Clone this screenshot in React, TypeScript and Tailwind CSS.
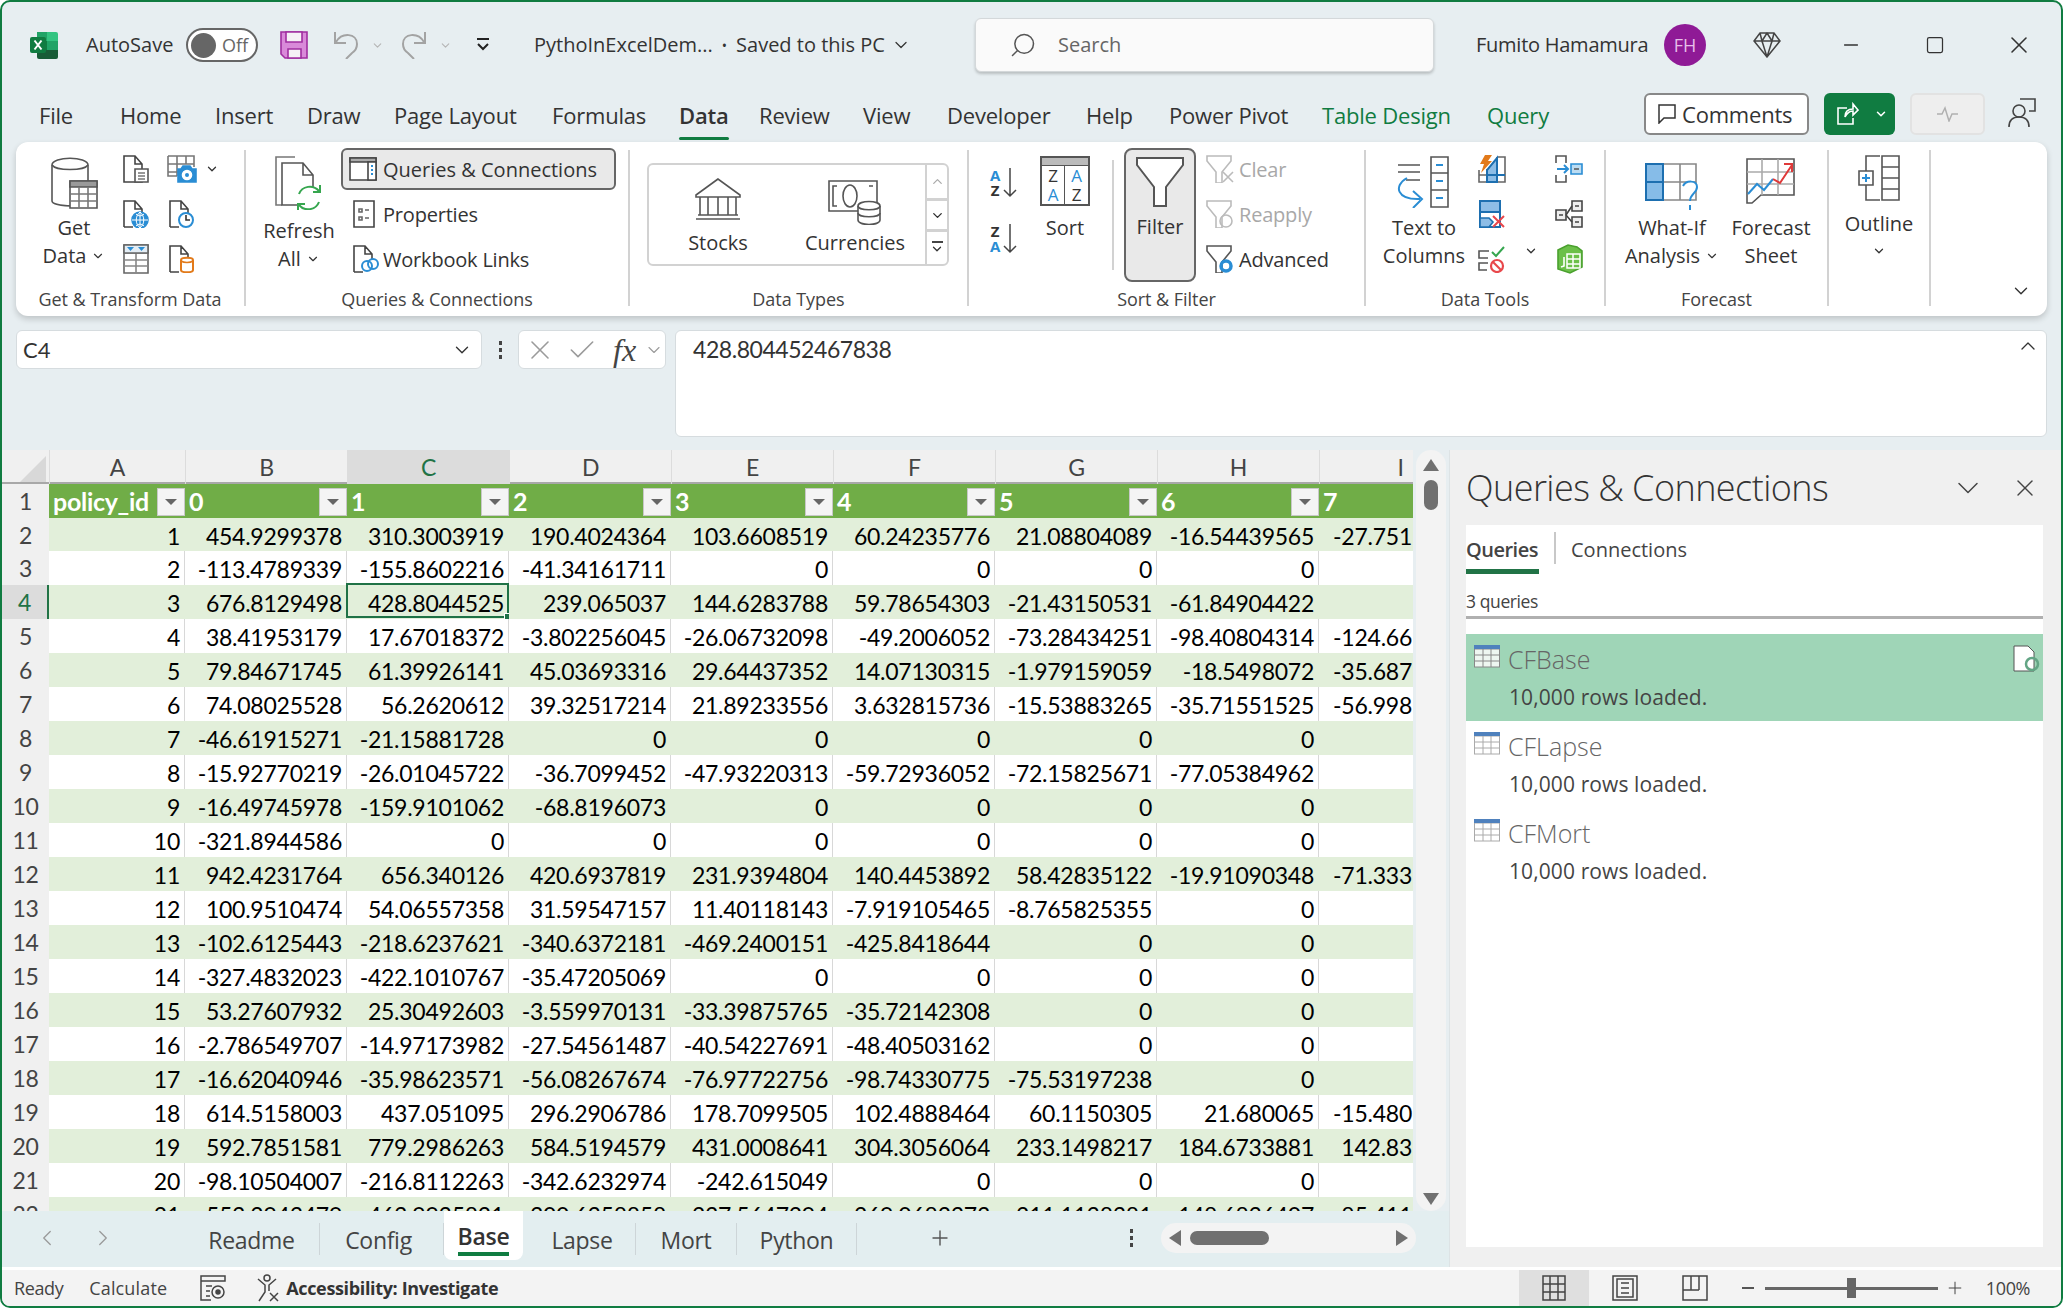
import React from 'react';
import { ChevronDown, ChevronUp, ChevronLeft, ChevronRight, X, Check, Minus, Square, Search, Plus } from 'lucide-react';

const tabs: [string, number, string?][] = [
  ['File', 81], ['Home', 95], ['Insert', 92], ['Draw', 87], ['Page Layout', 158], ['Formulas', 127], ['Data', 80], ['Review', 104],
  ['View', 84], ['Developer', 139], ['Help', 83], ['Power Pivot', 153], ['Table Design', 165, 'g'], ['Query', 100, 'g'],
];

const rows: string[][] = [
  ['454.9299378', '310.3003919', '190.4024364', '103.6608519', '60.24235776', '21.08804089', '-16.54439565', '-27.751'],
  ['-113.4789339', '-155.8602216', '-41.34161711', '0', '0', '0', '0', ''],
  ['676.8129498', '428.8044525', '239.065037', '144.6283788', '59.78654303', '-21.43150531', '-61.84904422', ''],
  ['38.41953179', '17.67018372', '-3.802256045', '-26.06732098', '-49.2006052', '-73.28434251', '-98.40804314', '-124.66'],
  ['79.84671745', '61.39926141', '45.03693316', '29.64437352', '14.07130315', '-1.979159059', '-18.5498072', '-35.687'],
  ['74.08025528', '56.2620612', '39.32517214', '21.89233556', '3.632815736', '-15.53883265', '-35.71551525', '-56.998'],
  ['-46.61915271', '-21.15881728', '0', '0', '0', '0', '0', ''],
  ['-15.92770219', '-26.01045722', '-36.7099452', '-47.93220313', '-59.72936052', '-72.15825671', '-77.05384962', ''],
  ['-16.49745978', '-159.9101062', '-68.8196073', '0', '0', '0', '0', ''],
  ['-321.8944586', '0', '0', '0', '0', '0', '0', ''],
  ['942.4231764', '656.340126', '420.6937819', '231.9394804', '140.4453892', '58.42835122', '-19.91090348', '-71.333'],
  ['100.9510474', '54.06557358', '31.59547157', '11.40118143', '-7.919105465', '-8.765825355', '0', ''],
  ['-102.6125443', '-218.6237621', '-340.6372181', '-469.2400151', '-425.8418644', '0', '0', ''],
  ['-327.4832023', '-422.1010767', '-35.47205069', '0', '0', '0', '0', ''],
  ['53.27607932', '25.30492603', '-3.559970131', '-33.39875765', '-35.72142308', '0', '0', ''],
  ['-2.786549707', '-14.97173982', '-27.54561487', '-40.54227691', '-48.40503162', '0', '0', ''],
  ['-16.62040946', '-35.98623571', '-56.08267674', '-76.97722756', '-98.74330775', '-75.53197238', '0', ''],
  ['614.5158003', '437.051095', '296.2906786', '178.7099505', '102.4888464', '60.1150305', '21.680065', '-15.480'],
  ['592.7851581', '779.2986263', '584.5194579', '431.0008641', '304.3056064', '233.1498217', '184.6733881', '142.83'],
  ['-98.10504007', '-216.8112263', '-342.6232974', '-242.615049', '0', '0', '0', ''],
  ['553.2943479', '463.9935821', '300.6358858', '237.5647294', '-269.0682373', '-211.1138381', '-148.6836407', '-85.411'],
];

const gridCols = 'grid grid-cols-[47px_136px_162px_162px_162px_162px_162px_162px_162px_162px]';

function Ico({ w, h, children }: { w: number; h: number; children: React.ReactNode }) {
  return (
    <svg width={w} height={h} viewBox={`0 0 ${w} ${h}`} fill="none" stroke="#555" strokeWidth="1.6" className="block shrink-0">
      {children}
    </svg>
  );
}

const Doc = () => <path d="M1 27V1h11l7 8v6 M12 1v8h7 M1 27h9" fill="#fff" stroke="#444" />;

function Small({ kind }: { kind: string }) {
  if (kind === 'textdoc')
    return <Ico w={26} h={28}><path d="M1 1h11l7 8v18H1z M12 1v8h7" fill="#fff" stroke="#444" /><path d="M12 14h13v13H12z" fill="#fff" stroke="#555" /><path d="M15 18h7M15 21h7M15 24h7" stroke="#777" /></Ico>;
  if (kind === 'webcam')
    return <Ico w={30} h={28}><path d="M1 1h26v11M1 9h26M1 17h11M10 1v20M19 1v8M1 1v20h9" stroke="#777" /><path d="M11 14h3l2-3h7l2 3h4v13H11z" fill="#2a8dd4" stroke="#2a8dd4" /><circle cx="20" cy="20" r="4.5" fill="#fff" stroke="#fff" /><circle cx="20" cy="20" r="2" fill="#2a8dd4" stroke="none" /></Ico>;
  if (kind === 'webdoc')
    return <Ico w={26} h={28}><Doc /><circle cx="17" cy="20" r="8" fill="#2a8dd4" stroke="#2a8dd4" /><path d="M9 20h16M17 12v16M13 14c3 2.500 5 2.500 8 0M13 26c3-2.500 5-2.500 8 0M17 12c-5 4-5 12 0 16M17 12c5 4 5 12 0 16" stroke="#fff" strokeWidth="1" /></Ico>;
  if (kind === 'recent')
    return <Ico w={26} h={28}><Doc /><circle cx="17" cy="20" r="7" fill="#fff" stroke="#2a8dd4" strokeWidth="2" /><path d="M17 15v5h4" stroke="#333" /></Ico>;
  if (kind === 'tablefilter')
    return <Ico w={26} h={30}><path d="M1 1h24v28H1z" fill="#fff" stroke="#666" /><path d="M1 9h24M1 16h24M1 22h24M13 9v20" stroke="#888" /><path d="M1 1h24v8H1z" fill="#e3edf5" stroke="#666" /><path d="M4 3h7l-3.500 4zM15 3h7l-3.500 4z" fill="#2a8dd4" stroke="none" /></Ico>;
  if (kind === 'dbdoc')
    return <Ico w={26} h={28}><Doc /><path d="M12 15c0-3 12-3 12 0v10c0 3-12 3-12 0z" fill="#fff" stroke="#e27a1a" strokeWidth="2" /><path d="M12 16c3 2 9 2 12 0" stroke="#e27a1a" /></Ico>;
  if (kind === 'flash')
    return <Ico w={28} h={28}><path d="M1 15v12h26V2h-7" stroke="#666" /><path d="M1 20h26M19 2v25M9 14v13" stroke="#666" /><path d="M9 27V15L19 3v24zM9 20h18" fill="#8dbde6" stroke="#1d6fb0" strokeWidth="2" /><path d="M7 0h7l-4 6h4L3 18l3-9H2z" fill="#e27a1a" stroke="none" /></Ico>;
  if (kind === 'dup')
    return <Ico w={26} h={28}><path d="M1 1h20v26H1z" fill="#fff" stroke="#1d6fb0" strokeWidth="2" /><path d="M1 1h20v11H1z" fill="#8dbde6" stroke="#1d6fb0" strokeWidth="2" /><path d="M1 18h9l4 4-4 5H1z" fill="#8dbde6" stroke="#1d6fb0" /><path d="M14 16l11 11M25 16L14 27" stroke="#e8474b" strokeWidth="2" /></Ico>;
  if (kind === 'valid')
    return <Ico w={28} h={28}><path d="M11 6H1v7h9M10 18H1v7h8" stroke="#555" /><path d="M14 7l4 4 8-9" stroke="#36a64f" strokeWidth="2" /><circle cx="19" cy="21" r="6" stroke="#e8474b" strokeWidth="2.2" fill="#fff" /><path d="M15 17l8 8" stroke="#e8474b" strokeWidth="2.2" /></Ico>;
  if (kind === 'consol')
    return <Ico w={28} h={28}><path d="M11 8V1H1v7M1 20v7h10v-7" stroke="#555" /><path d="M2 14h11M9 10l4 4-4 4" stroke="#2a8dd4" strokeWidth="2" /><path d="M16 9h11v10H16z" fill="#bcdcf2" stroke="#2a8dd4" /><path d="M19 14h5" stroke="#555" /></Ico>;
  if (kind === 'relations')
    return <Ico w={28} h={28}><path d="M1 10h10v10H1zM17 1h10v10H17zM17 17h10v10H17z" fill="#eee" stroke="#444" /><path d="M11 15l6-9M11 15l6 7" stroke="#444" /><path d="M4 15h4M20 6h4M20 22h4" stroke="#444" /></Ico>;
  return <Ico w={28} h={30}><path d="M3 6l10-5 9 2 5 4v16l-12 6-12-4z" fill="#6cc04a" stroke="#4aa12e" /><path d="M12 10h13v14H12z" stroke="#fff" strokeWidth="1.5" /><path d="M18 10v14M12 15h13M12 20h13" stroke="#fff" strokeWidth="1.5" /><path d="M9 13v9l-3 1" stroke="#fff" /></Ico>;
}

function SmallStack({ items, className = '' }: { items: string[]; className?: string }) {
  return (
    <div className={`flex flex-col items-center pt-[4px] ${className}`}>
      {items.map((k, i) => (
        <div key={i} className="h-[45px] flex items-center justify-center"><Small kind={k} /></div>
      ))}
    </div>
  );
}

function Big({ width, ml = 0, top, icon, lines, gap, chev }: { width: number; ml?: number; top: number; icon: React.ReactNode; lines: string[]; gap: number; chev?: boolean }) {
  return (
    <div className="flex flex-col items-center shrink-0" style={{ width, marginLeft: ml, paddingTop: top }}>
      {icon}
      <div style={{ marginTop: gap }} className="flex flex-col items-center leading-[28px]">
        {lines.map((l, i) => (
          <span key={l} className="flex items-center gap-[5px] whitespace-nowrap">
            {l}
            {chev && i === lines.length - 1 && <ChevronDown size={14} strokeWidth={2} />}
          </span>
        ))}
      </div>
    </div>
  );
}

function Group({ width, label, children }: { width: number; label: string; children: React.ReactNode }) {
  return (
    <>
      <div className="flex flex-col h-[174px] shrink-0" style={{ width }}>
        <div className="flex h-[142px]">{children}</div>
        <div className="h-[30px] leading-[30px] text-center text-[18px] tracking-[-0.05px] text-[#444] whitespace-nowrap">{label}</div>
      </div>
      <div className="w-[2px] h-[156px] mt-[8px] bg-[#d2d2d2] shrink-0" />
    </>
  );
}

function ListRow({ icon, text, muted, active }: { icon: React.ReactNode; text: string; muted?: boolean; active?: boolean }) {
  return (
    <div className={`h-[45px] flex items-center ${muted ? 'text-[#a8a8a8]' : ''}`}>
      <div className={`flex items-center h-[42px] w-full ${active ? 'bg-[#e9e9e9] border-2 border-[#666] rounded-[6px]' : 'border-2 border-transparent'}`}>
        {icon}
        <span className={`whitespace-nowrap pt-[2px] ${active ? '' : 'tracking-[-0.2px]'}`}>{text}</span>
      </div>
    </div>
  );
}

const Funnel = ({ c = '#555' }: { c?: string }) => (
  <path d="M1 1h24v5L16 17v11h-6V17L1 6z" fill="#fff" stroke={c} />
);

function Ribbon() {
  return (
    <div className="ml-[14px] w-[2031px] h-[174px] bg-white rounded-[12px] flex shadow-[0_3px_6px_rgba(0,0,0,0.18)] text-[20px] text-[#333]">
      <Group width={228} label="Get & Transform Data">
        <Big width={80} ml={18} top={15} gap={5} chev lines={['Get', 'Data']} icon={
          <Ico w={48} h={52}>
            <path d="M2 8c0-9 36-9 36 0v38c-3 2-8 3-12 3-10 0-24-1-24-5z" fill="#fff" />
            <path d="M2 8c4 6 32 6 36 0" />
            <path d="M20 24h27v27H20z" fill="#fff" />
            <path d="M20 24h27v6H20z" fill="#9a9a9a" />
            <path d="M20 37h27M20 44h27M29 30v21M38 30v21" stroke="#777" />
          </Ico>
        } />
        <SmallStack items={['textdoc', 'webdoc', 'tablefilter']} className="w-[46px] ml-[-1px]" />
        <SmallStack items={['webcam', 'recent', 'dbdoc']} className="w-[46px]" />
        <ChevronDown size={14} strokeWidth={2.2} className="ml-[0px] mt-[20px] text-[#333]" />
      </Group>
      <Group width={382} label="Queries & Connections">
        <Big width={84} ml={11} top={14} gap={7} chev lines={['Refresh', 'All']} icon={
          <Ico w={48} h={54}>
            <path d="M20 1H1v48h6" stroke="#777" />
            <path d="M7 7h21l10 12v30H7z M28 7v12h10" fill="#fff" />
            <circle cx="34" cy="42" r="11" fill="#fff" stroke="#fff" />
            <path d="M24 38c3-8 14-10 20-3M44 46c-3 8-14 10-20 3" stroke="#36a64f" strokeWidth="2" />
            <path d="M45 29v7h-7M23 55v-7h7" stroke="#36a64f" strokeWidth="2" />
          </Ico>
        } />
        <div className="flex flex-col w-[275px] pt-[4px]">
          <ListRow active text="Queries & Connections" icon={
            <span className="mx-[6px]"><Ico w={28} h={24}><path d="M1 1h26v22H1z" fill="#fff" stroke="#444" /><path d="M1 1h26v4H1z" fill="#aaa" stroke="#444" /><path d="M19 5h8v18h-8z" fill="#fff" stroke="#444" /><path d="M22 9h2M22 13h2M22 17h2" stroke="#2a8dd4" strokeWidth="2" /></Ico></span>
          } />
          <ListRow text="Properties" icon={
            <span className="ml-[10px] mr-[8px]"><Ico w={22} h={28}><path d="M1 1h20v26H1z" fill="#fff" stroke="#444" /><path d="M6 9h3v3H6zM6 17h3v3H6zM12 10h4M12 18h4" stroke="#666" /></Ico></span>
          } />
          <ListRow text="Workbook Links" icon={
            <span className="ml-[10px] mr-[4px]"><Ico w={26} h={28}><Doc /><circle cx="14" cy="21" r="5" stroke="#2a8dd4" strokeWidth="2" fill="#fff" /><circle cx="20" cy="19" r="5" stroke="#2a8dd4" strokeWidth="2" /></Ico></span>
          } />
        </div>
      </Group>
      <Group width={337} label="Data Types">
        <div className="ml-[17px] mt-[21px] w-[302px] h-[103px] flex border-2 border-[#d2d2d2] rounded-[6px]">
          <div className="w-[138px] pt-[13px] flex flex-col items-center">
            <Ico w={48} h={42}>
              <path d="M24 1L2 17v2h44v-2z" fill="#fff" />
              <path d="M6 19v18M14 19v18M24 19v18M34 19v18M42 19v18M4 37h40M2 41h44" />
            </Ico>
            <span className="mt-[9px] leading-[28px]">Stocks</span>
          </div>
          <div className="w-[136px] pt-[14px] flex flex-col items-center">
            <Ico w={54} h={46}>
              <path d="M1 2h48v30H1z" fill="#fff" />
              <path d="M9 7H5v20h4M41 7h4" />
              <ellipse cx="22" cy="17" rx="7" ry="11" />
              <path d="M30 27c0-6 22-6 22 0v14c0 6-22 6-22 0z" fill="#fff" />
              <path d="M30 27c0 5 22 5 22 0M30 34c0 5 22 5 22 0" />
            </Ico>
            <span className="mt-[4px] leading-[28px]">Currencies</span>
          </div>
          <div className="ml-[2px] flex-1 flex flex-col border-l-2 border-[#d2d2d2]">
            <div className="h-[33px] flex items-center justify-center"><ChevronUp size={15} className="text-[#aaa]" /></div>
            <div className="h-[34px] border-y-3 border-[#d2d2d2] flex items-center justify-center"><ChevronDown size={15} strokeWidth={2.2} /></div>
            <div className="flex-1 flex flex-col items-center justify-center gap-[2px]"><div className="w-[11px] h-[2px] bg-[#444]" /><ChevronDown size={14} strokeWidth={2.2} className="mt-[-3px]" /></div>
          </div>
        </div>
      </Group>
      <Group width={395} label="Sort & Filter">
        <div className="w-[30px] ml-[21px] flex flex-col pt-[26px] shrink-0">
          <div className="flex font-bold text-[15px] leading-[15px]">
            <span className="flex flex-col items-center"><span className="text-[#2a8dd4]">A</span><span>Z</span></span>
            <svg width="16" height="30" viewBox="0 0 16 30" fill="none" stroke="#444" strokeWidth="1.5" className="ml-[2px]"><path d="M8 0v28M2 22l6 6 6-6" /></svg>
          </div>
          <div className="flex font-bold text-[15px] leading-[15px] mt-[26px]">
            <span className="flex flex-col items-center"><span>Z</span><span className="text-[#2a8dd4]">A</span></span>
            <svg width="16" height="30" viewBox="0 0 16 30" fill="none" stroke="#444" strokeWidth="1.5" className="ml-[2px]"><path d="M8 0v28M2 22l6 6 6-6" /></svg>
          </div>
        </div>
        <div className="w-[60px] ml-[15px] pt-[14px] flex flex-col items-center shrink-0">
          <div className="w-[50px] h-[50px] border-2 border-[#555] grid grid-cols-2 text-[17px] leading-[19px] text-center bg-white">
            <div className="col-span-2 h-[8px] bg-[#bbb] border-b border-[#555]" />
            <div className="border-r border-[#555] flex flex-col"><span>Z</span><span className="text-[#2a8dd4]">A</span></div>
            <div className="flex flex-col"><span className="text-[#2a8dd4]">A</span><span>Z</span></div>
          </div>
          <span className="mt-[8px] leading-[28px]">Sort</span>
        </div>
        <div className="w-[2px] h-[110px] mt-[18px] ml-[17px] bg-[#d2d2d2] shrink-0" />
        <div className="w-[72px] h-[134px] ml-[10px] mt-[6px] bg-[#e9e9e9] border-2 border-[#666] rounded-[8px] flex flex-col items-center pt-[7px] shrink-0">
          <svg width="48" height="50" viewBox="0 0 48 50" fill="none" stroke="#555" strokeWidth="2"><path d="M1 1h46v7L30 30v19H18V30L1 8z" fill="#fff" /></svg>
          <span className="mt-[6px] leading-[28px]">Filter</span>
        </div>
        <div className="flex flex-col pt-[4px] ml-[8px]">
          <ListRow muted text="Clear" icon={<span className="mr-[5px]"><Ico w={28} h={28}><Funnel c="#bbb" /><path d="M17 17l10 10M27 17L17 27" stroke="#bbb" /></Ico></span>} />
          <ListRow muted text="Reapply" icon={<span className="mr-[5px]"><Ico w={28} h={28}><Funnel c="#bbb" /><circle cx="20" cy="21" r="6" stroke="#bbb" /></Ico></span>} />
          <ListRow text="Advanced" icon={<span className="mr-[5px]"><Ico w={28} h={28}><Funnel /><circle cx="20" cy="21" r="5" stroke="#2a8dd4" strokeWidth="3.5" /><circle cx="20" cy="21" r="1.5" fill="#fff" stroke="none" /></Ico></span>} />
        </div>
      </Group>
      <Group width={238} label="Data Tools">
        <Big width={100} ml={8} top={14} gap={6} lines={['Text to', 'Columns']} icon={
          <Ico w={54} h={52}>
            <path d="M1 9h22M1 16h22M9 24h14" />
            <path d="M34 1h17v50H34z" fill="#fff" />
            <path d="M34 17h17M34 34h17" />
            <path d="M39 9h7M39 25h7M39 42h7" stroke="#2a8dd4" strokeWidth="2" />
            <path d="M10 22C-4 30 0 44 23 43M16 35l9 8-9 9" stroke="#2a8dd4" strokeWidth="2" />
          </Ico>
        } />
        <SmallStack items={['flash', 'dup', 'valid']} className="w-[28px] ml-[4px]" />
        <div className="w-[49px] flex justify-center pt-[102px]"><ChevronDown size={14} strokeWidth={2.2} /></div>
        <SmallStack items={['consol', 'relations', 'pq']} className="w-[28px]" />
      </Group>
      <Group width={221} label="Forecast">
        <Big width={110} ml={11} top={20} gap={2} chev lines={['What-If', 'Analysis']} icon={
          <Ico w={54} h={50}>
            <path d="M1 2h50v36H1z" fill="#fff" stroke="#888" />
            <path d="M18 2v36M35 2v36M1 20h50" stroke="#888" />
            <path d="M1 2h17v18H1zM1 20h17v18H1z" fill="#86bce8" stroke="#1d6fb0" strokeWidth="2" />
            <path d="M38 24c3-6 14-6 14 1 0 6-7 7-7 14M45 43v5" stroke="#2a8dd4" strokeWidth="2" fill="#fff" />
          </Ico>
        } />
        <Big width={88} top={16} gap={6} lines={['Forecast', 'Sheet']} icon={
          <Ico w={50} h={50}>
            <path d="M1 1h47v36H15l-9 8H1z" fill="#fff" />
            <path d="M1 14h47M1 26h47M16 1v36M32 1v36" stroke="#aaa" />
            <path d="M2 36l9-10 7 6 9-11" stroke="#2a8dd4" strokeWidth="2" />
            <path d="M27 21l7 4 12-18M38 6h8v8" stroke="#e03a3a" strokeWidth="2" />
          </Ico>
        } />
      </Group>
      <Group width={100} label="">
        <div className="w-[100px] flex flex-col items-center pt-[13px]">
          <Ico w={42} h={46}>
            <path d="M22 1H8v15M8 29v16h14" />
            <path d="M1 16h14v14H1z" fill="#fff" />
            <path d="M4 23h8M8 19v8" stroke="#2a8dd4" strokeWidth="2" />
            <path d="M24 1h17v44H24z" fill="#fff" />
            <path d="M24 12h17M24 23h17M24 34h17" />
          </Ico>
          <span className="mt-[9px] leading-[28px]">Outline</span>
          <ChevronDown size={14} strokeWidth={2.2} className="mt-[6px]" />
        </div>
      </Group>
      <div className="flex-1 flex justify-end items-end pr-[15px] pb-[14px]">
        <ChevronDown size={22} strokeWidth={1.5} />
      </div>
    </div>
  );
}

function TitleBar() {
  return (
    <div className="h-[88px] flex items-center pb-[2px] text-[20px] text-[#333] shrink-0">
      <svg width="28" height="28" viewBox="0 0 28 28" className="ml-[28px] shrink-0">
        <path d="M7 1h19a2 2 0 0 1 2 2v7H7z" fill="#33c481" />
        <path d="M7 1h10v9H7z" fill="#21a366" />
        <path d="M7 10h10v9H7z" fill="#107c41" />
        <path d="M17 10h11v9H17z" fill="#21a366" />
        <path d="M7 19h21v7a2 2 0 0 1-2 2H9a2 2 0 0 1-2-2z" fill="#185c37" />
        <rect x="0" y="6" width="16" height="16" rx="2" fill="#107c41" />
        <path d="M4.500 9.500l7 9M11.500 9.500l-7 9" stroke="#fff" strokeWidth="2" />
      </svg>
      <span className="ml-[28px] w-[100px] whitespace-nowrap">AutoSave</span>
      <div className="w-[72px] h-[34px] border-2 border-[#666] rounded-full flex items-center bg-white px-[3px] gap-[6px]">
        <div className="w-[25px] h-[25px] rounded-full bg-[#666]" />
        <span className="text-[#666] text-[18px]">Off</span>
      </div>
      <svg width="28" height="28" viewBox="0 0 28 28" className="ml-[22px] shrink-0" stroke="#a02ea0" strokeWidth="1.6">
        <path d="M1 1h26v26H5l-4-4z" fill="#d98ad9" />
        <path d="M6 1h16v10H6z" fill="#f5f0f5" />
        <path d="M8 18h13v9H8z" fill="#f5f0f5" />
      </svg>
      <svg width="26" height="28" viewBox="0 0 26 28" fill="none" stroke="#a3a3a3" strokeWidth="2" className="ml-[25px] shrink-0">
        <path d="M2 1v11h11M3 11c6-10 21-9 21 2 0 4-2 7-5 9l-6 6" />
      </svg>
      <ChevronDown size={13} className="ml-[12px] text-[#b5b5b5]" />
      <svg width="26" height="28" viewBox="0 0 26 28" fill="none" stroke="#a3a3a3" strokeWidth="2" className="ml-[17px] shrink-0">
        <path d="M24 1v11H13M23 11C17 1 2 2 2 13c0 4 2 7 5 9l6 6" />
      </svg>
      <ChevronDown size={13} className="ml-[12px] text-[#b5b5b5]" />
      <svg width="14" height="14" viewBox="0 0 14 14" fill="none" stroke="#222" strokeWidth="2" className="ml-[24px] shrink-0">
        <path d="M1 1h12M2 6l5 5 5-5" />
      </svg>
      <span className="ml-[44px] whitespace-nowrap w-[377px] flex items-center gap-[9px] shrink-0">
        PythoInExcelDem...
        <span className="text-[14px]">•</span>
        Saved to this PC
        <ChevronDown size={24} strokeWidth={1.5} className="ml-[-3px]" />
      </span>
      <div className="ml-[64px] w-[459px] h-[54px] bg-[#fafafa] rounded-[6px] border border-[#d4d8da] shadow-[0_2px_3px_rgba(0,0,0,0.2)] flex items-center pl-[33px] shrink-0">
        <Search size={28} strokeWidth={1.3} className="text-[#555] scale-x-[-1]" />
        <span className="ml-[21px] text-[#666]">Search</span>
      </div>
      <span className="ml-[42px] w-[188px] whitespace-nowrap tracking-[-0.25px]">Fumito Hamamura</span>
      <div className="w-[42px] h-[42px] rounded-full bg-[#8f1a96] text-[#e6bfe8] flex items-center justify-center text-[18px] shrink-0">FH</div>
      <svg width="28" height="26" viewBox="0 0 28 26" fill="none" stroke="#444" strokeWidth="1.5" className="ml-[47px] shrink-0">
        <path d="M7 1h14l6 8-13 16L1 9zM1 9h26M9 9l5 16 5-16M7 1l2 8 5-8 5 8 2-8" />
      </svg>
      <Minus size={22} strokeWidth={1.5} className="ml-[59px]" />
      <Square size={20} strokeWidth={1.5} className="ml-[63px]" />
      <X size={28} strokeWidth={1.3} className="ml-[60px]" />
    </div>
  );
}

function TabRow() {
  return (
    <div className="h-[52px] flex text-[22px] tracking-[-0.2px] text-[#333] pl-[37px] shrink-0">
      {tabs.map(([t, w, g]) => (
        <div key={t} style={{ width: w }} className="shrink-0 h-[52px] pt-[1px] leading-[48px] whitespace-nowrap">
          <span className={`relative inline-block h-[48px] ${t === 'Data' ? 'font-semibold' : ''} ${g ? 'text-[#107c41]' : ''}`}>
            {t}
            {t === 'Data' && <span className="absolute left-0 right-0 bottom-[-1px] h-[3px] bg-[#107c41] rounded" />}
          </span>
        </div>
      ))}
      <div className="ml-[57px] mt-[3px] w-[165px] h-[42px] bg-white border-2 border-[#888] rounded-[6px] flex items-center pl-[12px] gap-[6px] shrink-0">
        <svg width="18" height="20" viewBox="0 0 18 20" fill="none" stroke="#333" strokeWidth="1.5"><path d="M1 1h16v13H6l-5 5z" /></svg>
        Comments
      </div>
      <div className="ml-[15px] mt-[3px] w-[71px] h-[42px] bg-[#107c41] rounded-[6px] flex items-center pl-[13px] gap-[15px] shrink-0">
        <svg width="22" height="24" viewBox="0 0 22 24" fill="none" stroke="#fff" strokeWidth="1.6"><path d="M10 6H1v16h15v-6M8 15c0-6 4-8 8-8V2l5 6-5 5V9c-4 0-6 2-8 6z" /></svg>
        <ChevronDown size={14} strokeWidth={2.6} className="text-white" />
      </div>
      <div className="ml-[15px] mt-[3px] w-[75px] h-[42px] bg-[#eeeeee] border-2 border-[#e2e2e2] rounded-[6px] flex items-center justify-center shrink-0">
        <svg width="24" height="16" viewBox="0 0 24 16" fill="none" stroke="#b0b0b0" strokeWidth="1.5"><path d="M1 8h5l3-6 4 13 3-7h6" /></svg>
      </div>
      <svg width="28" height="30" viewBox="0 0 28 30" fill="none" stroke="#444" strokeWidth="1.6" className="ml-[23px] mt-[8px] shrink-0">
        <circle cx="11" cy="13" r="6" />
        <path d="M1 29c0-7 4-10 10-10s10 3 10 10M12 1h15v12h-6" />
      </svg>
    </div>
  );
}

function FormulaBar() {
  return (
    <div className="h-[134px] flex pt-[14px] pl-[14px] text-[#333] shrink-0">
      <div className="w-[466px] h-[39px] bg-white border border-[#d6dcdf] rounded-[6px] flex items-center justify-between pl-[6px] pr-[8px] font-['Lato',sans-serif] text-[22px]">
        C4
        <ChevronDown size={22} strokeWidth={1.5} />
      </div>
      <div className="w-[36px] h-[39px] flex flex-col items-center justify-center gap-[3px]">
        <div className="w-[3px] h-[4px] bg-[#444]" /><div className="w-[3px] h-[4px] bg-[#444]" /><div className="w-[3px] h-[4px] bg-[#444]" />
      </div>
      <div className="w-[148px] h-[39px] bg-white border border-[#d6dcdf] rounded-[6px] flex items-center pl-[5px] text-[#9b9b9b]">
        <X size={32} strokeWidth={1.2} />
        <Check size={32} strokeWidth={1.2} className="ml-[10px]" />
        <span className="ml-[15px] font-['Liberation_Serif',serif] italic text-[32px] text-[#444] leading-none">fx</span>
        <ChevronDown size={20} strokeWidth={1.3} className="ml-[8px]" />
      </div>
      <div className="ml-[9px] w-[1372px] h-[107px] bg-white border border-[#d6dcdf] rounded-[6px] flex justify-between pl-[17px] pr-[6px] pt-[3px]">
        <span className="font-['Lato',sans-serif] text-[23px] tracking-[-0.45px] leading-[30px]">428.804452467838</span>
        <ChevronUp size={24} strokeWidth={1.3} />
      </div>
    </div>
  );
}

function FilterBtn() {
  return (
    <div className="ml-auto w-[28px] h-[28px] bg-[#f4f4f4] border border-[#c8c8c8] flex items-center justify-center shrink-0">
      <div className="w-0 h-0 border-x-[6px] border-x-transparent border-t-[6px] border-t-[#666]" />
    </div>
  );
}

function Sheet() {
  const letters = ['A', 'B', 'C', 'D', 'E', 'F', 'G', 'H', 'I'];
  const heads = ['policy_id', '0', '1', '2', '3', '4', '5', '6', '7'];
  return (
    <div className="w-[1411px] h-[761px] overflow-hidden bg-white font-['Lato',sans-serif] text-[23px] tracking-[-0.25px] text-black shrink-0">
      <div className={`${gridCols} h-[34px] bg-[#f0f0f0] border-b-2 border-[#a8a8a8] text-[#444]`}>
        <div className="flex items-end justify-end pr-[3px] pb-[2px]">
          <div className="w-0 h-0 border-l-[26px] border-l-transparent border-b-[26px] border-b-[#d8d8d8]" />
        </div>
        {letters.map((l) => (
          <div key={l} className={`text-center leading-[34px] border-l border-[#dcdcdc] ${l === 'C' ? 'bg-[#dcdcdc] text-[#217346] border-b-2 border-[#217346] h-[34px]' : ''}`}>{l}</div>
        ))}
      </div>
      <div className={`${gridCols} h-[33px]`}>
        <div className="bg-[#f0f0f0] text-[#444] text-center leading-[35px]">1</div>
        {heads.map((h) => (
          <div key={h} className="bg-[#70ad47] text-white font-bold text-[25px] tracking-[-0.3px] flex items-center pl-[4px] leading-[35px] whitespace-nowrap">
            {h}
            {h !== '7' && <FilterBtn />}
          </div>
        ))}
      </div>
      {rows.map((r, i) => {
        const odd = i % 2 === 0;
        const selected = i === 2;
        return (
          <div key={i} className={`${gridCols} h-[34px] border-b border-[#a9d08e] box-border ${i === 0 ? 'border-t' : ''}`}>
            <div className={`text-center leading-[35px] ${selected ? 'bg-[#dcdcdc] text-[#217346] border-r-2 border-[#217346]' : 'bg-[#f0f0f0] text-[#444]'}`}>{i + 2}</div>
            <div className={`text-right pr-[4px] leading-[36px] border-r ${odd ? 'bg-[#e2efda] border-transparent' : 'bg-white border-[#d8d8d8]'}`}>{i + 1}</div>
            {r.map((v, j) => (
              <div key={j} className={`relative text-right leading-[36px] whitespace-nowrap ${j < 7 ? 'border-r pr-[4px]' : 'pr-[69px]'} ${odd ? 'bg-[#e2efda] border-transparent' : 'bg-white border-[#d8d8d8]'}`}>
                {v}
                {selected && j === 1 && (
                  <span className="absolute left-[-1px] top-[-2px] w-[163px] h-[35px] border-2 border-[#1f7246]">
                    <span className="absolute right-[-4px] bottom-[-4px] w-[7px] h-[7px] bg-[#1f7246] border border-white" />
                  </span>
                )}
              </div>
            ))}
          </div>
        );
      })}
    </div>
  );
}

function VScroll() {
  return (
    <div className="w-[36px] h-[761px] px-[3px] shrink-0">
      <div className="h-full bg-[#f3f3f3] rounded-full flex flex-col items-center pt-[9px]">
        <div className="w-0 h-0 border-x-[8px] border-x-transparent border-b-[12px] border-b-[#707070]" />
        <div className="w-[14px] h-[30px] mt-[9px] rounded-full bg-[#707070]" />
        <div className="mt-auto mb-[6px] w-0 h-0 border-x-[8px] border-x-transparent border-t-[12px] border-t-[#707070]" />
      </div>
    </div>
  );
}

function SheetTabs() {
  const items: [string, number, string][] = [
    ['Readme', 136, ''], ['Config', 124, 'pr-[6px]'], ['Base', 79, ''], ['Lapse', 113, 'pl-[6px]'], ['Mort', 101, ''], ['Python', 120, ''],
  ];
  return (
    <div className="h-[56px] flex bg-[#e3eef0] text-[#444] text-[23px] tracking-[-0.3px]">
      <ChevronLeft size={26} strokeWidth={1.2} className="ml-[32px] mt-[14px] text-[#999]" />
      <ChevronRight size={26} strokeWidth={1.2} className="ml-[30px] mt-[14px] text-[#999]" />
      <div className="ml-[68px] flex items-start shrink-0">
        {items.map(([t, w, pad]) => (
          <div key={t} style={{ width: w }} className={`flex justify-center shrink-0 ${pad} ${t === 'Base' ? 'h-[49px] bg-white rounded-b-[8px]' : 'mt-[12px] h-[32px] border-r border-[#cdd5d8] leading-[34px]'}`}>
            {t === 'Base' ? (
              <span className="h-[45px] leading-[50px] font-semibold border-b-[4px] border-[#107c41] text-[#333]">{t}</span>
            ) : t}
          </div>
        ))}
      </div>
      <Plus size={24} strokeWidth={1.4} className="ml-[71px] mt-[15px] text-[#555]" />
      <div className="ml-[178px] mt-[18px] flex flex-col gap-[3px] h-[20px] shrink-0">
        <div className="w-[3px] h-[4px] bg-[#444]" /><div className="w-[3px] h-[4px] bg-[#444]" /><div className="w-[3px] h-[4px] bg-[#444]" />
      </div>
      <div className="ml-[28px] mt-[12px] w-[255px] h-[30px] rounded-full bg-[#f3f3f3] flex items-center pl-[8px] pr-[8px] shrink-0">
        <div className="w-0 h-0 border-y-[8px] border-y-transparent border-r-[12px] border-r-[#707070]" />
        <div className="ml-[9px] w-[79px] h-[14px] rounded-full bg-[#707070]" />
        <div className="ml-auto w-0 h-0 border-y-[8px] border-y-transparent border-l-[12px] border-l-[#707070]" />
      </div>
    </div>
  );
}

function TableIcon({ active }: { active?: boolean }) {
  return (
    <svg width="26" height="23" viewBox="0 0 26 23" fill="none" stroke={active ? '#888' : '#aaa'} strokeWidth="1" className="block shrink-0">
      <rect x="0.5" y="4" width="25" height="18" fill={active ? '#eef6f1' : '#fff'} />
      <path d="M0 0h26v4H0z" fill="#4f81bd" stroke="none" />
      <path d="M9 4v18M17 4v18M0 10h26M0 16h26" />
    </svg>
  );
}

function Pane() {
  const items = ['CFBase', 'CFLapse', 'CFMort'];
  return (
    <div className="w-[612px] h-[817px] bg-[#f0f0f0] border-l border-[#dde3e5] pl-[16px] shrink-0 text-[#444]">
      <div className="h-[75px] w-[577px] flex items-center pt-[1px]">
        <span className="font-light text-[36px] tracking-[-0.55px] text-[#333] whitespace-nowrap">Queries &amp; Connections</span>
        <ChevronDown size={36} strokeWidth={1} className="ml-auto" />
        <X size={28} strokeWidth={1.2} className="ml-[25px] mr-[4px]" />
      </div>
      <div className="w-[577px] h-[722px] bg-white text-[20px]">
        <div className="flex h-[49px]">
          <div className="w-[73px] h-[49px] border-b-[5px] border-[#217346] font-semibold tracking-[-0.5px] leading-[50px] whitespace-nowrap">Queries</div>
          <div className="w-[2px] h-[32px] mt-[7px] ml-[15px] bg-[#c8c8c8]" />
          <div className="ml-[15px] leading-[50px]">Connections</div>
        </div>
        <div className="h-[45px] mb-[15px] leading-[54px] text-[17.5px] tracking-[-0.4px] border-b-[3px] border-[#b0b0b0]">3 queries</div>
        {items.map((q, i) => (
          <div key={q} className={`h-[87px] pl-[8px] pr-[3px] pt-[11px] flex ${i === 0 ? 'bg-[#9fd5b7]' : ''}`}>
            <TableIcon active={i === 0} />
            <div className="ml-[8px] flex-1 whitespace-nowrap">
              <div className="text-[25px] font-light text-[#666] leading-[28px]">{q}</div>
              <div className="mt-[9px] ml-[1px] text-[21px] tracking-[0.1px] leading-[30px]">10,000 rows loaded.</div>
            </div>
            {i === 0 && (
              <svg width="27" height="27" viewBox="0 0 27 27" fill="none" stroke="#555" strokeWidth="1" className="shrink-0">
                <path d="M1 1h14l6 6v19H1z" fill="#fff" />
                <circle cx="19" cy="19" r="6" stroke="#63a585" strokeWidth="2.5" />
              </svg>
            )}
          </div>
        ))}
      </div>
    </div>
  );
}

function StatusBar() {
  return (
    <div className="h-[39px] bg-[#f3f3f3] border-t-[3px] border-white flex items-center text-[18px] text-[#444] shrink-0">
      <span className="ml-[12px] tracking-[-0.4px]">Ready</span>
      <span className="ml-[26px] tracking-[0.15px]">Calculate</span>
      <svg width="26" height="26" viewBox="0 0 26 26" fill="none" stroke="#444" strokeWidth="1.5" className="ml-[33px] shrink-0">
        <path d="M1 1h24v5H1zM1 6v19h10M6 11h6M6 16h4M6 21h4" />
        <circle cx="18" cy="17" r="6" /><circle cx="18" cy="17" r="2" fill="#444" />
      </svg>
      <svg width="28" height="28" viewBox="0 0 28 28" fill="none" stroke="#444" strokeWidth="1.5" className="ml-[30px] shrink-0">
        <circle cx="11" cy="4" r="3" /><path d="M2 5l7 6v7l-6 9M20 5l-7 6v6M14 19l8 8M22 19l-8 8" />
      </svg>
      <span className="ml-[2px] font-bold text-[#333] tracking-[-0.35px]">Accessibility: Investigate</span>
      <div className="ml-auto w-[70px] h-[36px] bg-[#dfdfdf] flex items-center justify-center">
        <svg width="24" height="26" viewBox="0 0 24 26" fill="none" stroke="#444" strokeWidth="1.5"><path d="M1 1h22v24H1zM8 1v24M16 1v24M1 9h22M1 17h22" /></svg>
      </div>
      <svg width="26" height="26" viewBox="0 0 26 26" fill="none" stroke="#444" strokeWidth="1.5" className="ml-[23px]"><path d="M1 1h24v24H1zM5 4h16v18H5zM9 8h8M9 13h8M9 18h8" /></svg>
      <svg width="26" height="26" viewBox="0 0 26 26" fill="none" stroke="#444" strokeWidth="1.5" className="ml-[44px]"><path d="M1 1h24v24H1zM1 15h16M9 1v14M17 1v14" /></svg>
      <span className="ml-[34px] w-[12px] h-[2px] bg-[#555]" />
      <div className="ml-[11px] w-[173px] h-[3px] bg-[#666] relative">
        <span className="absolute left-[82px] top-[-9px] w-[9px] h-[20px] bg-[#666]" />
      </div>
      <Plus size={20} strokeWidth={1.2} className="ml-[7px]" />
      <span className="ml-[21px] mr-[31px] tracking-[-0.4px]">100%</span>
    </div>
  );
}

export default function App() {
  return (
    <div className="w-[2063px] h-[1308px] overflow-hidden border-2 border-[#107c41] rounded-[10px] bg-[#e7eef1] flex flex-col font-['Open_Sans',sans-serif]">
      <TitleBar />
      <TabRow />
      <Ribbon />
      <FormulaBar />
      <div className="flex h-[817px] shrink-0">
        <div className="w-[1447px] flex flex-col shrink-0">
          <div className="flex">
            <Sheet />
            <VScroll />
          </div>
          <SheetTabs />
        </div>
        <Pane />
      </div>
      <StatusBar />
    </div>
  );
}
